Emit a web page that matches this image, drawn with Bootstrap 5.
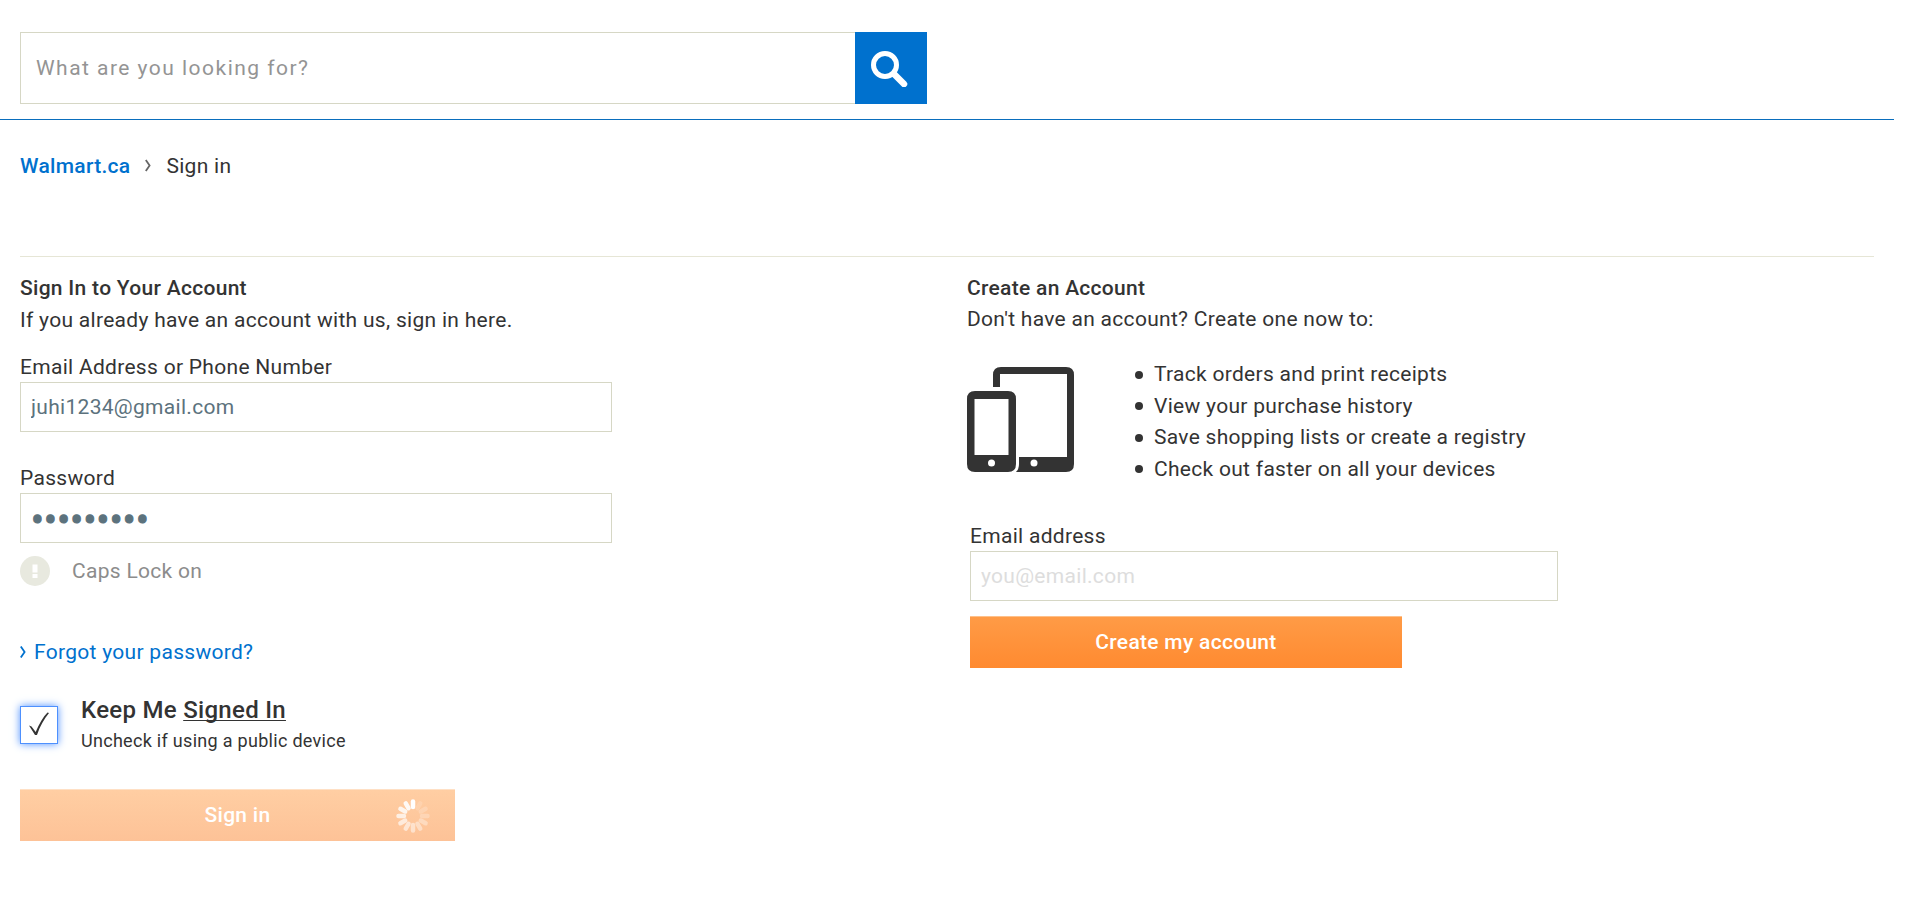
<!DOCTYPE html>
<html lang="en">
<head>
<meta charset="utf-8">
<meta name="viewport" content="width=device-width, initial-scale=1">
<title>Sign in - Walmart.ca</title>
<link href="https://cdn.jsdelivr.net/npm/bootstrap@5.3.0/dist/css/bootstrap.min.css" rel="stylesheet">
<style>
  body { font-family: Roboto, "Liberation Sans", sans-serif; font-size: 21px; line-height: 32px; color: #333; background: #fff; letter-spacing: .014em; }
  .page { margin-right: 26px; }
  .site-header { padding: 32px 0 15px; border-bottom: 1px solid #0a6ebd; }
  .px-page { padding-left: 20px; padding-right: 20px; }
  a { color: #0071ce; text-decoration: none; }
  .form-control { color: #5c727d; border-color: #d6d7c5; border-radius: 0; font-size: 21px; letter-spacing: inherit; }
  .search-box { height: 72px; padding: 0 15px; letter-spacing: .07em; border-right: 0; }
  .search-box::placeholder { color: #949494; }
  .search-btn { width: 72px; background: #0071ce; border-radius: 0; padding: 0 4px 0 0; }
  .search-btn:hover { background: #005fad; }
  .crumbs { padding-top: 30px; padding-bottom: 74px; gap: 15px; }
  .crumbs a, .section-title { font-weight: 500; }
  .crumbs .chevron { color: #666; margin-top: 2px; }
  .rule { border-top: 1px solid #e6e6d6; margin: 0 20px; }
  .content { padding-top: 15px; }
  .section-title { font-size: 21px; line-height: 32px; margin: 0; }
  .field { height: 50px; padding: 0 10px; }
  .field[type=password] { font-size: 38px; line-height: 48px; padding-top: 4px; -webkit-text-stroke: 1px #5c727d; }
  .field::placeholder { color: #ddd; }
  .field-label { line-height: 30px; }
  .form-narrow { max-width: 592px; padding-top: 16px; }
  .form-narrow .field + .field-label { margin-top: 31px; }
  .caps { color: #8c8c8c; gap: 22px; margin-top: 13px; line-height: 30px; }
  .forgot { margin-top: 50px; }
  .keep { gap: 23px; margin-top: 26px; }
  .tick { width: 38px; height: 38px; margin: 0; border: 1px solid #4d90fe; border-radius: 0 !important; box-shadow: 0 0 8px #4d90fe; margin-top: 12px; }
  .tick:checked { background-color: #fff; border-color: #4d90fe; background-size: 36px; background-image: url("data:image/svg+xml,%3Csvg xmlns='http://www.w3.org/2000/svg' viewBox='0 0 36 36'%3E%3Cpath d='M8 18.500L10.500 19.500 14.700 25C18 17 22 10 26.500 5.500L28 6C23 12 19 19 16 28H14z' fill='%23333'/%3E%3C/svg%3E"); }
  .keep-title { font-size: 24px; font-weight: 500; line-height: 32px; }
  .keep-title u { text-decoration-thickness: 1px; text-underline-offset: 2px; text-decoration-skip-ink: none; }
  .keep-note { font-size: 18px; line-height: 30px; }
  .btn-go { height: 52px; color: #fff; font-size: 21px; font-weight: 500; letter-spacing: inherit; border: 0; border-top: 1px solid #ffc089; border-radius: 0; background: linear-gradient(#ff9b46, #ff8a30); }
  .btn-go:hover { color: #fff; background: #ff8a30; }
  .btn-signin { width: 435px; margin-top: 33px; padding: 0 25px 0 0; background: linear-gradient(#ffcea3, #fdc297); border-top-color: #ffe0c5; }
  .btn-create { width: 432px; margin-top: 15px; }
  .spin-space { width: 59px; }
  .create-lead { line-height: 30px; }
  .perks { gap: 61px; margin-top: 25px; }
  .perks ul { line-height: 1.5; }
  .perks li { display: flex; align-items: center; gap: 11px; }
  .perks li::before { content: ""; width: 8px; height: 8px; border-radius: 50%; background: #333; }
  .register { max-width: 591px; padding-left: 3px; margin-top: 36px; }
</style>
</head>
<body>
<div class="page">
  <header class="site-header">
    <div class="row g-0">
      <form class="col-6 px-page" role="search">
        <div class="input-group">
          <input type="search" class="form-control search-box" placeholder="What are you looking for?" aria-label="Search">
          <button type="button" class="btn search-btn" aria-label="Search">
            <svg width="38" height="38" viewBox="0 0 38 38" fill="none" stroke="#fff"><circle cx="15" cy="16" r="11.500" stroke-width="5"/><path d="M24 25l10 10" stroke-width="6.500" stroke-linecap="round"/></svg>
          </button>
        </div>
      </form>
    </div>
  </header>

  <nav class="d-flex px-page crumbs" aria-label="Breadcrumb">
    <a href="#">Walmart.ca</a>
    <svg class="chevron" width="6" height="28" viewBox="0 0 6 28" fill="none" stroke="currentColor" stroke-width="1.800"><path d="M.8 8l3.800 5.500L.8 19"/></svg>
    <span>Sign in</span>
  </nav>
  <div class="rule"></div>

  <main class="row g-0 content">
    <section class="col-6 px-page">
      <h2 class="section-title">Sign In to Your Account</h2>
      <p class="mb-0">If you already have an account with us, sign in here.</p>
      <form>
        <div class="form-narrow">
          <label for="login" class="field-label d-block">Email Address or Phone Number</label>
          <input id="login" type="text" class="form-control field" value="juhi1234@gmail.com">
          <label for="pass" class="field-label d-block">Password</label>
          <input id="pass" type="password" class="form-control field" value="sunflower">
        </div>
        <div class="d-flex align-items-center caps">
          <svg width="30" height="30" viewBox="0 0 30 30"><circle cx="15" cy="15" r="15" fill="#e8e9df"/><path fill="#fff" d="M12.500 8.500h5v8h-5zM12.500 18h5v4h-5z"/></svg>
          <span>Caps Lock on</span>
        </div>
        <div class="forgot d-flex"><a href="#" class="d-flex align-items-center gap-2"><svg width="6" height="14" viewBox="0 0 6 14" fill="none" stroke="currentColor" stroke-width="1.800"><path d="M.8 1.500L4.600 7 .8 12.500"/></svg>Forgot your password?</a></div>
        <div class="d-flex keep">
          <input id="keep" type="checkbox" class="form-check-input tick flex-shrink-0" checked>
          <label for="keep"><span class="keep-title d-block">Keep Me <u>Signed In</u></span><span class="keep-note d-block">Uncheck if using a public device</span></label>
        </div>
        <button type="button" class="btn btn-go btn-signin d-flex align-items-center">
          <span class="spin-space"></span><span class="flex-grow-1 text-center">Sign in</span>
          <svg width="34" height="34" viewBox="-17 -17 34 34" stroke="#fff" stroke-width="4.500" stroke-linecap="round">
            <path d="M0-9V-14.500"/>
            <path d="M0-9V-14.500" transform="rotate(30)" opacity=".15"/>
            <path d="M0-9V-14.500" transform="rotate(60)" opacity=".2"/>
            <path d="M0-9V-14.500" transform="rotate(90)" opacity=".25"/>
            <path d="M0-9V-14.500" transform="rotate(120)" opacity=".35"/>
            <path d="M0-9V-14.500" transform="rotate(150)" opacity=".42"/>
            <path d="M0-9V-14.500" transform="rotate(180)" opacity=".5"/>
            <path d="M0-9V-14.500" transform="rotate(210)" opacity=".57"/>
            <path d="M0-9V-14.500" transform="rotate(240)" opacity=".65"/>
            <path d="M0-9V-14.500" transform="rotate(270)" opacity=".73"/>
            <path d="M0-9V-14.500" transform="rotate(300)" opacity=".82"/>
            <path d="M0-9V-14.500" transform="rotate(330)" opacity=".9"/>
          </svg>
        </button>
      </form>
    </section>

    <section class="col-6 px-page">
      <h2 class="section-title">Create an Account</h2>
      <p class="mb-0 create-lead">Don't have an account? Create one now to:</p>
      <div class="d-flex align-items-start perks">
        <svg class="mt-2" width="107" height="105" viewBox="0 0 107 105">
          <path fill="#333" fill-rule="evenodd" d="M26 20V8q0-8 8-8H99q8 0 8 8V97q0 8-8 8H49q3-3 3-8V90H100V7H33V20z"/>
          <path fill="#333" fill-rule="evenodd" d="M8 24H41q8 0 8 8V97q0 8-8 8H8q-8 0-8-8V32q0-8 8-8zM7.500 32V88H41.500V32z"/>
          <circle cx="24.500" cy="96" r="3.500" fill="#fff"/><circle cx="67" cy="96" r="3.500" fill="#fff"/>
        </svg>
        <ul class="list-unstyled mb-0">
          <li>Track orders and print receipts</li>
          <li>View your purchase history</li>
          <li>Save shopping lists or create a registry</li>
          <li>Check out faster on all your devices</li>
        </ul>
      </div>
      <form class="register">
        <label for="email" class="field-label d-block">Email address</label>
        <input id="email" type="email" class="form-control field" placeholder="you@email.com">
        <button type="button" class="btn btn-go btn-create">Create my account</button>
      </form>
    </section>
  </main>
</div>
<script src="https://cdn.jsdelivr.net/npm/bootstrap@5.3.0/dist/js/bootstrap.bundle.min.js"></script>
</body>
</html>
